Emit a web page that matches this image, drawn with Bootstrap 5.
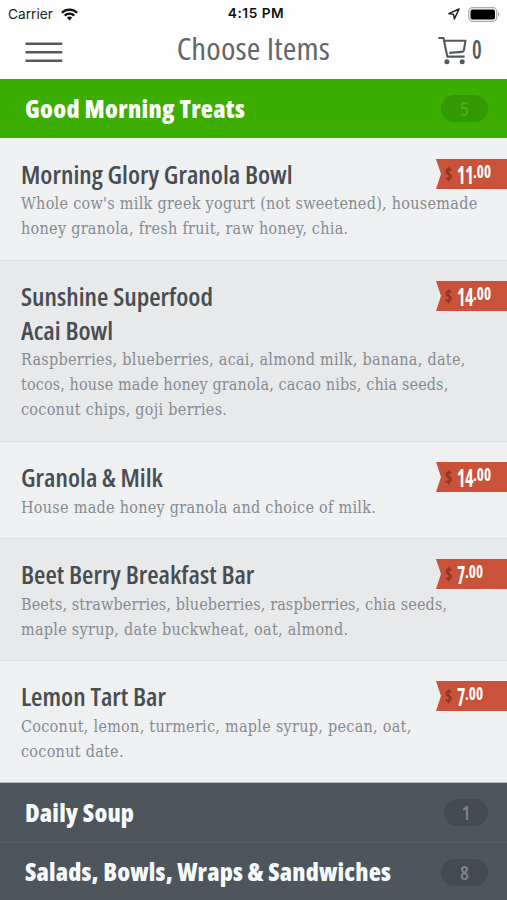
<!DOCTYPE html>
<html lang="en">
<head>
<meta charset="utf-8">
<meta name="viewport" content="width=device-width, initial-scale=1">
<title>Choose Items</title>
<link href="https://cdn.jsdelivr.net/npm/bootstrap@5.3.0/dist/css/bootstrap.min.css" rel="stylesheet">
<style>
body{width:507px;height:900px;overflow:hidden;background:#fefefe;font-family:"Open Sans",sans-serif}
.statusbar{height:28px;padding:0 7px 0 8px;font:400 13.7px/27px Inter,sans-serif;color:#222}
.statusbar .clock{font-weight:600;color:#111;letter-spacing:.5px;margin-left:4px}
.topbar{height:51px;padding:0 25px;color:#54595d}
.topbar h1{font-size:31px;font-weight:400;font-stretch:75%;line-height:40px;margin:0;color:#62676b;letter-spacing:.15px;transform:scaleX(1.06)}
.side{width:62px;flex-basis:0}
.cart-n{font-size:27px;font-weight:600;font-stretch:75%;line-height:41px;width:10px;transform:scaleX(.8);transform-origin:0 50%}
.section-head{height:59px;padding:0 19px 0 25px;background:#4d565d;color:#f7fafc;font-size:25px;font-weight:800;font-stretch:75%;letter-spacing:.16px}
.section-head+.section-head{border-top:1px solid #545e65}
.section-head.open{background:#3cae00;color:#fff;letter-spacing:.3px}
.count{width:44px;height:27px;border-radius:14px;background:#434b52;color:#7d868d;font-size:20px;font-weight:600;font-stretch:75%;line-height:27px;text-align:center;letter-spacing:0}
.count.wide{width:47px}
.open .count{background:#349a03;color:#4bae1d}
.dish{padding:18px 0 19px 21px;background:#eef0f2;border-bottom:1px solid #dcdee0}
.dish.alt{background:#e8e9eb}
.dish:first-child{padding-top:19px}
.dish:last-child{border-color:#b9bdc1}
.dish h2{font-size:25px;font-weight:600;font-stretch:75%;line-height:34px;margin:0;color:#484d52;transform:scaleX(1.045);transform-origin:0 50%}
.dish p{font:400 16px/25px "DejaVu Serif Condensed","DejaVu Serif",serif;font-stretch:condensed;letter-spacing:.29px;margin:0;color:#858b91;white-space:nowrap}
.dish:nth-child(n+3){padding-bottom:18px}
.dish:nth-child(n+3) p{margin-top:1px}
.snug{letter-spacing:.13px}
.flag{width:71px;height:30px;margin-top:2px;background:#ca523a;clip-path:polygon(0 0,100% 0,100% 100%,0 100%,5px 50%);color:#fff;padding-left:9px;font-weight:800;font-stretch:75%}
.flag small{font-size:17px;font-weight:700;line-height:31px;width:12px;color:#8c3420;transform:scaleX(.9);transform-origin:0 50%}
.flag b{font-size:25px;line-height:30px;font-weight:700;transform:scaleX(.7);transform-origin:0 50%}
.flag b.two{width:16px}.flag b.one{width:8px}
.flag sup{font-size:18px;line-height:25px;top:0;font-weight:700;transform:scaleX(.84);transform-origin:0 50%}
</style>
<script src="https://cdn.jsdelivr.net/npm/bootstrap@5.3.0/dist/js/bootstrap.bundle.min.js"></script>
</head>
<body>
<header>
  <div class="statusbar d-flex justify-content-between">
    <div class="side flex-grow-1 d-flex align-items-center">
      <span>Carrier</span>
      <svg class="ms-2" width="17" height="13" viewBox="0 0 17 13" fill="none" stroke="#111" stroke-width="2.2"><path d="M.9 4.7a10.8 10.8 0 0 1 15.2 0M3.7 7.6a6.8 6.8 0 0 1 9.6 0"/><path d="M5.9 9.7a3.7 3.7 0 0 1 5.2 0L8.5 12.4z" fill="#111" stroke="none"/></svg>
    </div>
    <span class="clock">4:15 PM</span>
    <div class="side flex-grow-1 d-flex align-items-center justify-content-end">
      <svg class="me-2" width="12" height="12" viewBox="0 0 12 12" fill="none" stroke="#222" stroke-width="1.5" stroke-linejoin="round"><path d="M11 1 .9 5.6l4.7.8.8 4.6z"/></svg>
      <svg width="32" height="15" viewBox="0 0 32 15"><rect x=".7" y=".7" width="28" height="13.6" rx="4" fill="#fff" stroke="#aaa" stroke-width="1.2"/><rect x="2.5" y="2.5" width="24.5" height="10" rx="2" fill="#000"/><path d="M30 5.3a2.4 2.4 0 0 1 0 4.4z" fill="#aaa"/></svg>
    </div>
  </div>
  <nav class="topbar d-flex justify-content-between">
    <div class="side flex-grow-1"><svg class="d-block" width="38" height="51" viewBox="0 0 38 51" stroke="#54585c" stroke-width="2.4"><path d="M.5 15.7h36.7M.5 24.2h36.7M.5 32.7h36.7"/></svg></div>
    <h1>Choose Items</h1>
    <div class="side flex-grow-1 d-flex justify-content-end gap-1">
      <svg class="flex-shrink-0" width="30" height="42" viewBox="0 0 30 42" fill="none" stroke="#54595d" stroke-width="2.1" stroke-linejoin="round"><path d="M.3 10h5.2l3.800 18.600h17.300M6.300 12.800h21.200l-1.600 9.400c-.3 1.300-1 1.600-2.300 1.700l-12.300 1"/><circle cx="8.900" cy="33.700" r="2.500" fill="#54595d" stroke="none"/><circle cx="24.200" cy="33.700" r="2.500" fill="#54595d" stroke="none"/></svg>
      <span class="cart-n">0</span>
    </div>
  </nav>
</header>
<main>
  <div class="section-head open d-flex align-items-center justify-content-between"><span>Good Morning Treats</span><span class="count wide">5</span></div>
  <section>
    <article class="dish">
      <div class="d-flex justify-content-between align-items-start"><h2>Morning Glory Granola Bowl</h2><div class="flag d-flex"><small>$</small><b class="two">11</b><sup>.00</sup></div></div>
      <p>Whole cow's milk greek yogurt (not sweetened), housemade<br>honey granola, fresh fruit, raw honey, chia.</p>
    </article>
    <article class="dish alt">
      <div class="d-flex justify-content-between align-items-start"><h2>Sunshine Superfood<br>Acai Bowl</h2><div class="flag d-flex"><small>$</small><b class="two">14</b><sup>.00</sup></div></div>
      <p>Raspberries, blueberries, acai, almond milk, banana, date,<br><span class="snug">tocos, house made honey granola, cacao nibs, chia seeds,</span><br>coconut chips, goji berries.</p>
    </article>
    <article class="dish">
      <div class="d-flex justify-content-between align-items-start"><h2>Granola &amp; Milk</h2><div class="flag d-flex"><small>$</small><b class="two">14</b><sup>.00</sup></div></div>
      <p>House made honey granola and choice of milk.</p>
    </article>
    <article class="dish alt">
      <div class="d-flex justify-content-between align-items-start"><h2>Beet Berry Breakfast Bar</h2><div class="flag d-flex"><small>$</small><b class="one">7</b><sup>.00</sup></div></div>
      <p><span class="snug">Beets, strawberries, blueberries, raspberries, chia seeds,</span><br>maple syrup, date buckwheat, oat, almond.</p>
    </article>
    <article class="dish">
      <div class="d-flex justify-content-between align-items-start"><h2>Lemon Tart Bar</h2><div class="flag d-flex"><small>$</small><b class="one">7</b><sup>.00</sup></div></div>
      <p>Coconut, lemon, turmeric, maple syrup, pecan, oat,<br>coconut date.</p>
    </article>
  </section>
  <div class="section-head d-flex align-items-center justify-content-between"><span>Daily Soup</span><span class="count">1</span></div>
  <div class="section-head d-flex align-items-center justify-content-between"><span>Salads, Bowls, Wraps &amp; Sandwiches</span><span class="count wide">8</span></div>
</main>
</body>
</html>
